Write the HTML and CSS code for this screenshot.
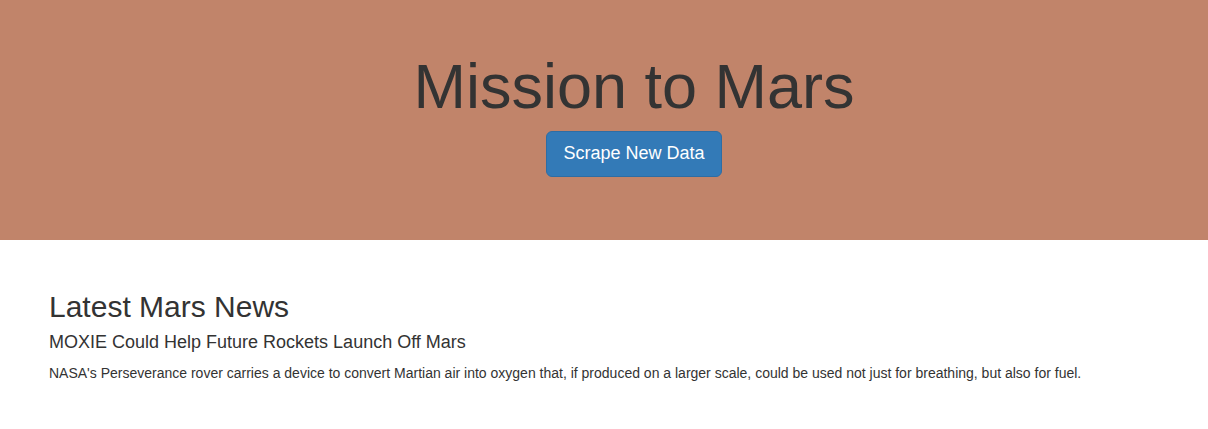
FILE: index.html
```html
<!DOCTYPE html>
<html lang="en">
<head>
<meta charset="utf-8">
<title>Mission to Mars</title>
<link rel="stylesheet" href="styles.css">
</head>
<body>
  <header class="jumbotron">
    <div class="hero">
      <h1 class="hero-title">Mission to Mars</h1>
      <p class="hero-action"><a class="btn-scrape" href="#">Scrape New Data</a></p>
    </div>
  </header>
  <main class="container">
    <section class="news">
      <h2 class="news-heading">Latest Mars News</h2>
      <h4 class="news-title">MOXIE Could Help Future Rockets Launch Off Mars</h4>
      <p class="news-teaser">NASA's Perseverance rover carries a device to convert Martian air into oxygen that, if produced on a larger scale, could be used not just for breathing, but also for fuel.</p>
    </section>
  </main>
</body>
</html>
```

FILE: styles.css
```css
* { box-sizing: border-box; }
html, body { margin: 0; padding: 0; }
body {
  font-family: "Liberation Sans", Arial, Helvetica, sans-serif;
  font-size: 14px;
  line-height: 1.42857;
  color: #333;
  background: #fff;
}
.jumbotron {
  background: #c1846a;
  padding: 48px 0 48px;
  margin-bottom: 30px;
}
.hero {
  text-align: center;
  padding-left: 60px;
}
.hero-title {
  margin: 4px 0 10px;
  font-size: 63px;
  font-weight: 400;
  line-height: 1.1;
  color: #333;
}
.hero-action { margin: 0 0 15px; }
.btn-scrape {
  display: inline-block;
  padding: 10px 16px;
  font-size: 18px;
  line-height: 1.3333;
  color: #fff;
  background: #337ab7;
  border: 1px solid #2e6da4;
  border-radius: 6px;
  text-decoration: none;
}
.container {
  width: 1140px;
  margin: 0 auto;
  padding: 0 15px;
}
.news { padding-top: 20px; }
.news-heading {
  margin: 0 0 10px;
  font-size: 30px;
  font-weight: 400;
  line-height: 1.1;
}
.news-title {
  margin: 0 0 11px;
  font-size: 18px;
  font-weight: 400;
  line-height: 1.1;
}
.news-teaser { margin: 0 0 10px; }
```
